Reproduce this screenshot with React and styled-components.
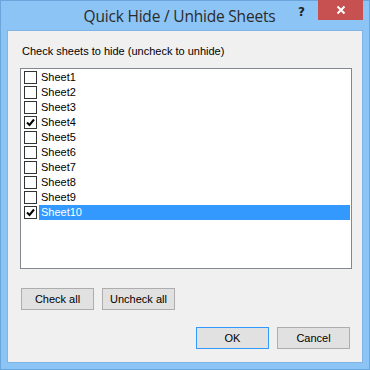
import styled, { createGlobalStyle } from "styled-components";
import { useState } from "react";

const Global = createGlobalStyle`
  html, body { margin: 0; padding: 0; background: #8bc4f5; }
  body { font-family: "Liberation Sans", Arial, sans-serif; }
`

const Window = styled.div`
  width: 370px;
  height: 370px;
  box-sizing: border-box;
  border: 1px solid #6aa6dc;
  background: #8bc4f5;
  display: flex;
  flex-direction: column;
`

const TitleBar = styled.div`
  height: 29px;
  display: flex;
  align-items: flex-start;
`

const Title = styled.div`
  flex: 1;
  text-align: center;
  font-family: "Open Sans", "Noto Sans", sans-serif;
  font-size: 15.5px;
  color: #2b2b2b;
  padding-top: 4px;
  padding-left: 60px;
  letter-spacing: -0.2px;
`

const Help = styled.div`
  width: 10px;
  font-family: "DejaVu Sans", sans-serif;
  font-weight: bold;
  font-size: 12px;
  color: #222;
  padding-top: 4px;
  margin-right: 10px;
`

const Close = styled.div`
  width: 45px;
  height: 20px;
  margin-top: -1px;
  margin-right: 6px;
  background: #c75050;
  display: flex;
  align-items: center;
  justify-content: center;
`

const Client = styled.div`
  flex: 1;
  margin: 0 6px 6px 6px;
  border: 1px solid #7fb5e5;
  background: #f0f0f0;
  display: flex;
  flex-direction: column;
  font-size: 11px;
  color: #000;
`

const Label = styled.div`
  padding: 14px 0 0 14px;
  line-height: 13px;
  height: 13px;
`

const List = styled.div`
  margin: 10px 10px 0 12px;
  height: 198px;
  border: 1px solid #828790;
  background: #fff;
  padding: 1px 1px 0 1px;
`

const Row = styled.div`
  height: 15px;
  display: flex;
  align-items: center;
`

const Box = styled.div`
  width: 11px;
  height: 11px;
  border: 1px solid #333;
  background: #fff;
  margin-left: 2px;
  margin-right: 2px;
  display: flex;
  align-items: center;
  justify-content: center;
`

const Name = styled.div`
  flex: 1;
  height: 15px;
  line-height: 15px;
  padding-left: 2px;
  background: ${p => (p.$selected ? "#3399ff" : "transparent")};
  color: ${p => (p.$selected ? "#fff" : "#000")};
`

const ButtonRow = styled.div`
  display: flex;
  gap: 8px;
  justify-content: ${p => (p.$right ? "flex-end" : "flex-start")};
  padding: ${p => (p.$right ? "17px 12px 0 0" : "19px 0 0 13px")};
`

const Button = styled.div`
  width: 71px;
  height: 20px;
  border: 1px solid ${p => (p.$default ? "#3399ff" : "#adadad")};
  background: #e1e1e1;
  display: flex;
  align-items: center;
  justify-content: center;
  font-size: 11px;
`

const Check = () => (
  <svg width="9" height="9" viewBox="0 0 9 9">
    <path d="M1 4.5 L3.5 7 L8 1.5" stroke="#000" strokeWidth="2" fill="none" />
  </svg>
)

const sheets = ["Sheet1", "Sheet2", "Sheet3", "Sheet4", "Sheet5", "Sheet6", "Sheet7", "Sheet8", "Sheet9", "Sheet10"]

export default function App() {
  const [checked] = useState({ Sheet4: true, Sheet10: true })
  return (
    <>
      <Global />
      <Window>
        <TitleBar>
          <Title>Quick Hide / Unhide Sheets</Title>
          <Help>?</Help>
          <Close>
            <svg width="10" height="10" viewBox="0 0 10 10">
              <path d="M1.5 1.5 L8.5 8.5 M8.5 1.5 L1.5 8.5" stroke="#fff" strokeWidth="2" />
            </svg>
          </Close>
        </TitleBar>
        <Client>
          <Label>Check sheets to hide (uncheck to unhide)</Label>
          <List>
            {sheets.map(s => (
              <Row key={s}>
                <Box>{checked[s] && <Check />}</Box>
                <Name $selected={s === "Sheet10"}>{s}</Name>
              </Row>
            ))}
          </List>
          <ButtonRow>
            <Button>Check all</Button>
            <Button>Uncheck all</Button>
          </ButtonRow>
          <ButtonRow $right>
            <Button $default>OK</Button>
            <Button>Cancel</Button>
          </ButtonRow>
        </Client>
      </Window>
    </>
  )
}
